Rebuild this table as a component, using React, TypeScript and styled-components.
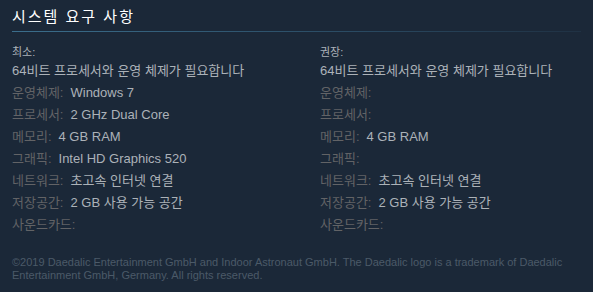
import React from "react";
import styled, { createGlobalStyle } from "styled-components";

type Spec = { label: string; value?: string };

const MINIMUM: Spec[] = [
  { label: "운영체제", value: "Windows 7" },
  { label: "프로세서", value: "2 GHz Dual Core" },
  { label: "메모리", value: "4 GB RAM" },
  { label: "그래픽", value: "Intel HD Graphics 520" },
  { label: "네트워크", value: "초고속 인터넷 연결" },
  { label: "저장공간", value: "2 GB 사용 가능 공간" },
  { label: "사운드카드" },
];

const RECOMMENDED: Spec[] = [
  { label: "운영체제" },
  { label: "프로세서" },
  { label: "메모리", value: "4 GB RAM" },
  { label: "그래픽" },
  { label: "네트워크", value: "초고속 인터넷 연결" },
  { label: "저장공간", value: "2 GB 사용 가능 공간" },
  { label: "사운드카드" },
];

export default function App() {
  return (
    <>
      <GlobalStyle />
      <Panel>
        <Title>시스템 요구 사항</Title>
        <Columns>
          <ReqColumn heading="최소:" specs={MINIMUM} />
          <ReqColumn heading="권장:" specs={RECOMMENDED} />
        </Columns>
        <Legal>
          ©2019 Daedalic Entertainment GmbH and Indoor Astronaut GmbH. The Daedalic logo is a trademark of Daedalic
          Entertainment GmbH, Germany. All rights reserved.
        </Legal>
      </Panel>
    </>
  );
}

function ReqColumn({ heading, specs }: { heading: string; specs: Spec[] }) {
  return (
    <Column>
      <Heading>{heading}</Heading>
      <SpecList>
        <SpecItem>64비트 프로세서와 운영 체제가 필요합니다</SpecItem>
        {specs.map((s) => (
          <SpecItem key={s.label}>
            <Label>{s.label}:</Label>
            {s.value && <Value>{s.value}</Value>}
          </SpecItem>
        ))}
      </SpecList>
    </Column>
  );
}

// --- Styled Components ---

const GlobalStyle = createGlobalStyle`
  html, body {
    margin: 0;
    padding: 0;
    background: #1b2838;
  }
`;

const Panel = styled.div`
  width: 593px;
  height: 292px;
  box-sizing: border-box;
  padding: 8px 12px 0;
  background: #1b2838;
  font-family: Arial, "Liberation Sans", "Noto Sans CJK KR", sans-serif;
  overflow: hidden;
`;

const Title = styled.h2`
  margin: 0;
  padding-bottom: 5px;
  font-size: 15px;
  font-weight: normal;
  line-height: 18px;
  letter-spacing: 2px;
  color: #ffffff;

  &::after {
    content: "";
    display: block;
    height: 1px;
    margin-top: 5px;
    background: linear-gradient(to right, #3b6e8c 0%, #2a4a62 60%, rgba(42, 71, 94, 0.3) 100%);
  }
`;

const Columns = styled.div`
  display: grid;
  grid-template-columns: 308px 1fr;
  margin-top: 8px;
`;

const Column = styled.div`
  display: flex;
  flex-direction: column;
`;

const Heading = styled.div`
  font-size: 11px;
  line-height: 14px;
  color: #acb2b8;
  margin-bottom: 1px;
`;

const SpecList = styled.ul`
  list-style: none;
  margin: 0;
  padding: 0;
`;

const SpecItem = styled.li`
  font-size: 13px;
  line-height: 22px;
  color: #acb2b8;
  white-space: nowrap;
`;

const Label = styled.span`
  color: #626366;
  margin-right: 7px;
`;

const Value = styled.span`
  color: #acb2b8;
`;

const Legal = styled.div`
  margin-top: 20px;
  font-size: 11px;
  line-height: 13px;
  color: #4b5a68;
`;
